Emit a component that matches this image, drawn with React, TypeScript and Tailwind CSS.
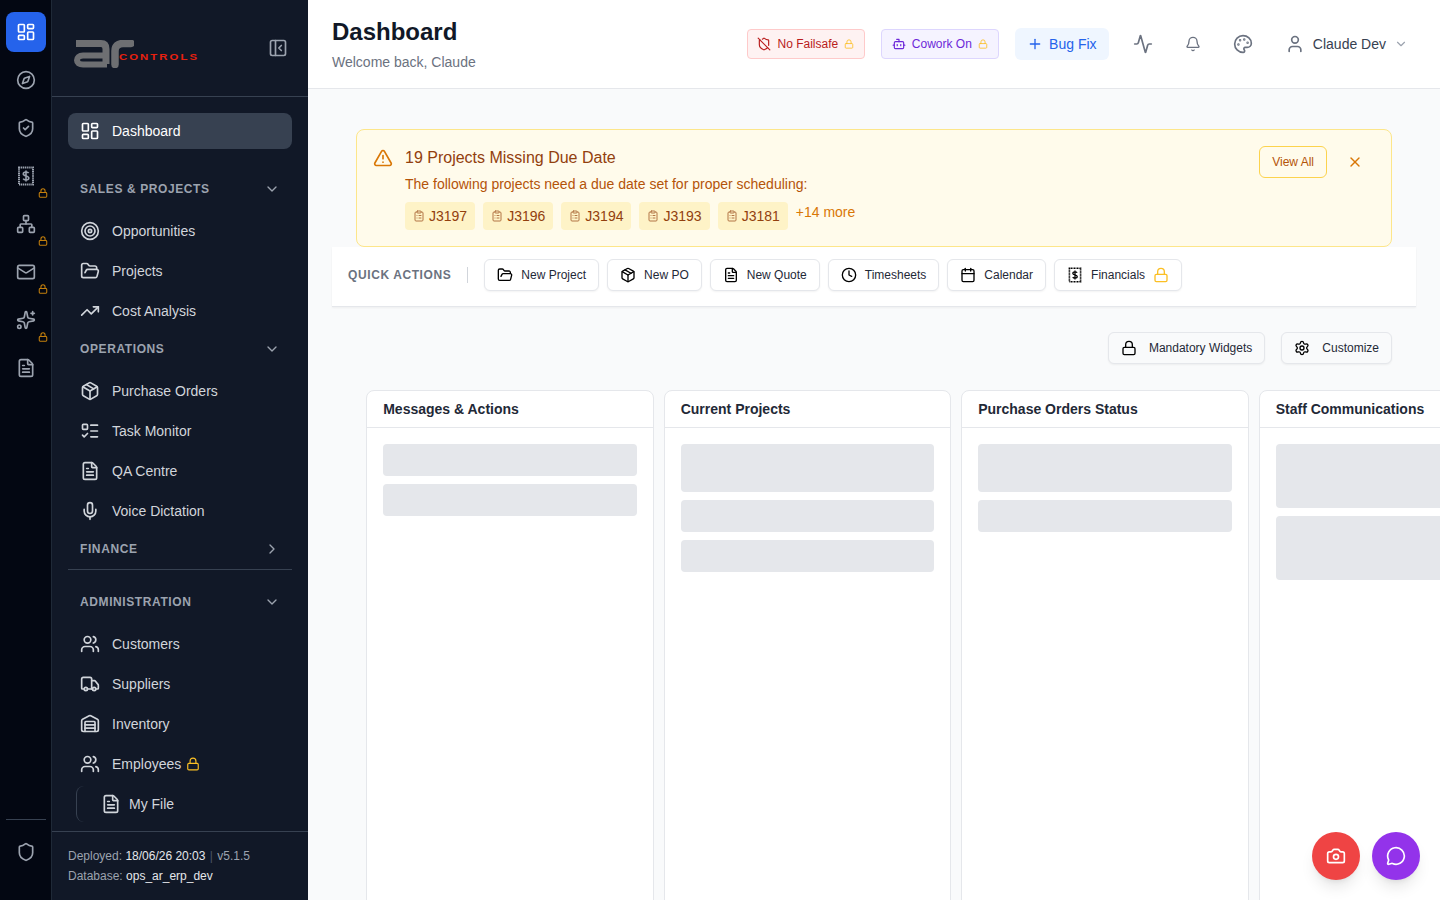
import React from "react";
import {
  Activity,
  Bell,
  Bot,
  Calendar,
  ChevronDown,
  ChevronRight,
  ClipboardList,
  Clock,
  Compass,
  FileText,
  FolderOpen,
  LayoutDashboard,
  ListTodo,
  Lock,
  Mail,
  MessageCircle,
  Mic,
  Network,
  Package,
  Palette,
  PanelLeftClose,
  Plus,
  Settings,
  Shield,
  ShieldCheck,
  ShieldOff,
  Sparkles,
  Target,
  TrendingUp,
  Truck,
  TriangleAlert,
  User,
  Users,
  Warehouse,
  X,
  Camera,
} from "lucide-react";

const ReceiptDollar = ({ className }: { className?: string }) => (
  <svg viewBox="0 0 20 20" fill="none" stroke="currentColor" strokeWidth="2" className={className}>
    <rect x="3" y="1.500" width="14" height="17" strokeDasharray="1.300 0.600" />
    <path d="M12.600 7.200c-.4-.8-1.300-1.200-2.600-1.200-1.600 0-2.700.7-2.700 2 0 2.600 5.500 1.200 5.500 4 0 1.300-1.200 2-2.800 2-1.400 0-2.400-.5-2.800-1.300M10 4.500v11" strokeWidth="1.600" />
  </svg>
);

const Logo = () => (
  <div className="flex items-end mt-[11px]">
    <svg viewBox="0 0 60 28" className="w-[60px] h-[28px] shrink-0" fill="none" stroke="#6e6f72">
      <path d="M2 3.500h25c3.500 0 5 2 5 5.500v15" strokeWidth="7" />
      <path d="M33 15.500H9C5 15.500 3 17.800 3 20.300S5 24.500 9 24.500h24" strokeWidth="6" />
      <path d="M41 24.500V11c0-5 3-7.500 8-7.500h8" strokeWidth="7.500" strokeLinecap="round" />
    </svg>
    <span className="ml-[-15px] mb-[7px] text-[8.500px] leading-[8px] font-bold tracking-[1.500px] text-[#e8200f] scale-x-[1.340] origin-left">
      CONTROLS
    </span>
  </div>
);

const RailIcon = ({ children, active, locked }: { children: React.ReactNode; active?: boolean; locked?: boolean }) => (
  <div className={`relative w-10 h-10 flex items-center justify-center rounded-lg ${active ? "bg-[#2563eb] text-white" : "text-[#9ca3af]"}`}>
    {children}
    {locked && <Lock className="absolute right-[-2px] bottom-[-2px] w-[10px] h-[10px] text-[#f59e0b] opacity-80" strokeWidth={2.500} />}
  </div>
);

const NavItem = ({ icon: Icon, label, locked }: { icon: any; label: string; locked?: boolean }) => (
  <div className="flex items-center h-10 px-3 gap-3 text-sm text-[#d1d5db]">
    <Icon className="w-5 h-5 shrink-0" />
    <span>{label}</span>
    {locked && <Lock className="w-[14px] h-[14px] text-[#fbbf24] -ml-[7px]" strokeWidth={2} />}
  </div>
);

const SectionHead = ({ label, open = true }: { label: string; open?: boolean }) => (
  <div className="flex items-center justify-between h-9 pl-3 pr-3 text-xs font-semibold tracking-wider text-[#9ca3af]">
    <span>{label}</span>
    {open ? <ChevronDown className="w-4 h-4" /> : <ChevronRight className="w-4 h-4" />}
  </div>
);

const Chip = ({ label }: { label: string }) => (
  <div className="flex items-center gap-1 h-7 px-2 rounded bg-[#fef3c7] text-sm text-[#92400e]">
    <ClipboardList className="w-3 h-3 opacity-70" />
    {label}
  </div>
);

const QuickBtn = ({ icon: Icon, label, locked }: { icon: any; label: string; locked?: boolean }) => (
  <button className="flex items-center gap-2 h-8 px-3 rounded-md border border-[#e5e7eb] bg-white text-xs text-[#1f2937] shadow-[0_1px_2px_rgba(0,0,0,0.05)]">
    <Icon className="w-4 h-4 text-black" />
    <span>{label}</span>
    {locked && <Lock className="w-4 h-4 text-[#fbbf24]" />}
  </button>
);

const WidgetCard = ({ title, bars }: { title: string; bars: string[] }) => (
  <div className="w-[287.5px] shrink-0 min-h-[600px] rounded-lg border border-[#e5e7eb] bg-white">
    <div className="h-[37px] flex items-center px-4 border-b border-[#e5e7eb] text-sm font-semibold text-[#1f2937] whitespace-nowrap">
      {title}
    </div>
    <div className="p-4 flex flex-col gap-2">
      {bars.map((b, i) => (
        <div key={i} className={`${b} rounded bg-[#e5e7eb]`} />
      ))}
    </div>
  </div>
);

export default function App() {
  return (
    <div className="flex h-[900px] w-[1440px] overflow-hidden bg-[#f9fafb] antialiased font-['Liberation_Sans',Arial,sans-serif]">
      {/* Icon rail */}
      <div className="w-[52px] shrink-0 flex flex-col items-center pt-3 pb-7 gap-2 bg-[#030712] border-r border-[#1f2937]">
        <RailIcon active><LayoutDashboard className="w-5 h-5" /></RailIcon>
        <RailIcon><Compass className="w-5 h-5" /></RailIcon>
        <RailIcon><ShieldCheck className="w-5 h-5" /></RailIcon>
        <RailIcon locked><ReceiptDollar className="w-5 h-5" /></RailIcon>
        <RailIcon locked><Network className="w-5 h-5" /></RailIcon>
        <RailIcon locked><Mail className="w-5 h-5" /></RailIcon>
        <RailIcon locked><Sparkles className="w-5 h-5" /></RailIcon>
        <RailIcon><FileText className="w-5 h-5" /></RailIcon>
        <div className="mt-auto w-10 border-t border-[#374151] mb-1" />
        <RailIcon><Shield className="w-5 h-5" /></RailIcon>
      </div>

      {/* Sidebar */}
      <div className="w-[256px] shrink-0 flex flex-col bg-[#111827]">
        <div className="h-[97px] shrink-0 flex items-center justify-between pl-[22px] pr-5 border-b border-[#374151]">
          <Logo />
          <PanelLeftClose className="w-5 h-5 text-[#9ca3af]" />
        </div>
        <div className="flex-1 px-4 pt-4 overflow-hidden">
          <div className="flex items-center h-9 px-3 gap-3 rounded-lg bg-[#374151] text-sm text-white">
            <LayoutDashboard className="w-5 h-5" />
            Dashboard
          </div>
          <div className="mt-[22px]">
            <SectionHead label="SALES & PROJECTS" />
            <div className="mt-1">
              <NavItem icon={Target} label="Opportunities" />
              <NavItem icon={FolderOpen} label="Projects" />
              <NavItem icon={TrendingUp} label="Cost Analysis" />
            </div>
          </div>
          <SectionHead label="OPERATIONS" />
          <div className="mt-1">
            <NavItem icon={Package} label="Purchase Orders" />
            <NavItem icon={ListTodo} label="Task Monitor" />
            <NavItem icon={FileText} label="QA Centre" />
            <NavItem icon={Mic} label="Voice Dictation" />
          </div>
          <SectionHead label="FINANCE" open={false} />
          <div className="mt-[2px] mb-[14px] border-t border-[#374151]" />
          <SectionHead label="ADMINISTRATION" />
          <div className="mt-1">
            <NavItem icon={Users} label="Customers" />
            <NavItem icon={Truck} label="Suppliers" />
            <NavItem icon={Warehouse} label="Inventory" />
            <NavItem icon={Users} label="Employees" locked />
            <div className="ml-2 my-[2px] h-9 flex items-center gap-2 pl-6 rounded-l-lg border-l border-[#374151] text-sm text-[#d1d5db]">
              <FileText className="w-5 h-5" />
              My File
            </div>
          </div>
        </div>
        <div className="h-[69px] shrink-0 border-t border-[#374151] px-4 pt-[14px] text-xs leading-5 text-[#9ca3af]">
          <div>
            Deployed: <span className="text-[#e5e7eb]">18/06/26 20:03</span> <span className="text-[#4b5563] px-[1px]">|</span> v5.1.5
          </div>
          <div>
            Database: <span className="text-[#e5e7eb]">ops_ar_erp_dev</span>
          </div>
        </div>
      </div>

      {/* Main */}
      <div className="relative flex-1 min-w-0 flex flex-col">
        <div className="h-[89px] shrink-0 flex items-center justify-between pl-6 pr-[32px] bg-white border-b border-[#e5e7eb]">
          <div>
            <h1 className="text-2xl font-semibold leading-8 text-[#111827]">Dashboard</h1>
            <p className="mt-[4px] text-sm leading-5 text-[#6b7280]">Welcome back, Claude</p>
          </div>
          <div className="flex items-center -mt-[1px]">
            <div className="w-[118px] h-[30px] flex items-center justify-center gap-[6px] rounded border border-[#fecaca] bg-[#fef2f2] text-xs text-[#b91c1c]">
              <ShieldOff className="w-[14px] h-[14px]" />
              No Failsafe
              <Lock className="w-[10px] h-[10px] text-[#fbbf24]" />
            </div>
            <div className="ml-4 w-[118px] h-[30px] flex items-center justify-center gap-[6px] rounded border border-[#ddd6fe] bg-[#f5f3ff] text-xs text-[#6d28d9]">
              <Bot className="w-[14px] h-[14px]" />
              Cowork On
              <Lock className="w-[10px] h-[10px] text-[#fbbf24]" />
            </div>
            <div className="ml-4 w-[94px] h-8 flex items-center justify-center gap-[6px] rounded-md bg-[#eff6ff] text-sm text-[#2563eb]">
              <Plus className="w-4 h-4" />
              Bug Fix
            </div>
            <Activity className="ml-6 w-5 h-5 text-[#6b7280]" />
            <Bell className="ml-[32px] w-4 h-4 text-[#6b7280]" />
            <Palette className="ml-[32px] w-5 h-5 text-[#6b7280]" />
            <User className="ml-[32px] w-5 h-5 text-[#6b7280]" />
            <span className="ml-2 text-sm text-[#374151]">Claude Dev</span>
            <ChevronDown className="ml-2 w-[14px] h-[14px] text-[#9ca3af]" />
          </div>
        </div>

        <div className="flex-1 px-6 pt-10">
          <div className="mx-6 h-[118px] flex rounded-lg border border-[#fde68a] bg-[#fffbeb] pl-4 pr-[28px] pt-4">
            <TriangleAlert className="w-5 h-5 mt-[2px] text-[#d97706]" />
            <div className="ml-3 flex-1">
              <div className="text-base leading-6 text-[#92400e]">19 Projects Missing Due Date</div>
              <div className="mt-1 text-sm leading-5 text-[#b45309]">The following projects need a due date set for proper scheduling:</div>
              <div className="mt-2 flex items-start gap-2">
                <Chip label="J3197" />
                <Chip label="J3196" />
                <Chip label="J3194" />
                <Chip label="J3193" />
                <Chip label="J3181" />
                <span className="text-sm leading-5 text-[#d97706]">+14 more</span>
              </div>
            </div>
            <button className="h-8 px-3 rounded-md border border-[#fcd34d] text-xs text-[#b45309]">View All</button>
            <X className="ml-5 mt-2 w-4 h-4 text-[#d97706]" />
          </div>

          <div className="h-[60px] flex items-center px-4 pb-1 bg-white shadow-[0_1px_2px_rgba(0,0,0,0.05)] border-b border-[#e5e7eb]">
            <span className="text-xs font-semibold tracking-wider text-[#6b7280]">QUICK ACTIONS</span>
            <div className="mx-4 w-px h-4 bg-[#d1d5db]" />
            <div className="flex gap-2">
              <QuickBtn icon={FolderOpen} label="New Project" />
              <QuickBtn icon={Package} label="New PO" />
              <QuickBtn icon={FileText} label="New Quote" />
              <QuickBtn icon={Clock} label="Timesheets" />
              <QuickBtn icon={Calendar} label="Calendar" />
              <QuickBtn icon={ReceiptDollar} label="Financials" locked />
            </div>
          </div>

          <div className="mt-[25px] mx-6 flex justify-end gap-4">
            <button className="h-8 px-3 flex items-center gap-3 rounded-md border border-[#e5e7eb] bg-[#f9fafb] text-xs text-[#1f2937] shadow-[0_1px_2px_rgba(0,0,0,0.05)]">
              <Lock className="w-4 h-4 text-black" />
              Mandatory Widgets
            </button>
            <button className="h-8 px-3 flex items-center gap-3 rounded-md border border-[#e5e7eb] bg-[#f9fafb] text-xs text-[#1f2937] shadow-[0_1px_2px_rgba(0,0,0,0.05)]">
              <Settings className="w-4 h-4 text-black" />
              Customize
            </button>
          </div>

          <div className="mt-[26px] ml-[34.2px] flex gap-[10px]">
            <WidgetCard title="Messages & Actions" bars={["h-8", "h-8"]} />
            <WidgetCard title="Current Projects" bars={["h-12", "h-8", "h-8"]} />
            <WidgetCard title="Purchase Orders Status" bars={["h-12", "h-8"]} />
            <WidgetCard title="Staff Communications" bars={["h-16", "h-16"]} />
          </div>
        </div>

        {/* Floating buttons */}
        <div className="absolute right-5 bottom-5 flex gap-3">
          <div className="w-12 h-12 rounded-full bg-[#ef4444] flex items-center justify-center text-white shadow-lg">
            <Camera className="w-5 h-5" />
          </div>
          <div className="w-12 h-12 rounded-full bg-[#9333ea] flex items-center justify-center text-white shadow-lg">
            <MessageCircle className="w-5 h-5" />
          </div>
        </div>
      </div>
    </div>
  );
}
